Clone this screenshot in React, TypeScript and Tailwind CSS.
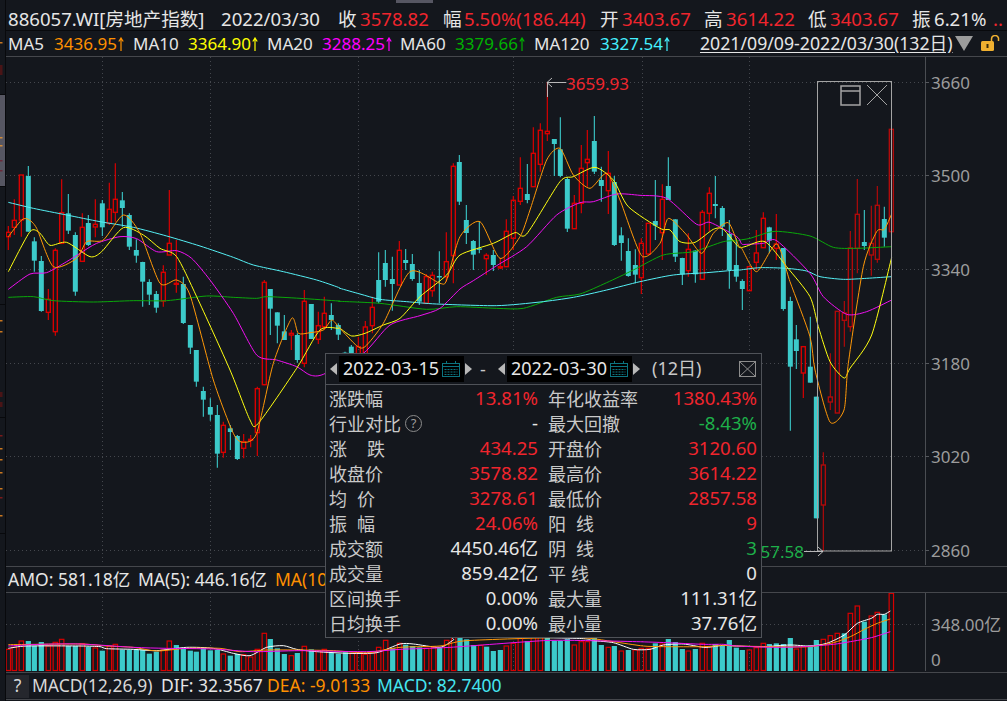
import React from "react"

const RED = "text-[#f0252d]"
const LABEL = "text-[#c9c9c9]"

type Pt = [number, number]
// x, high, body top, body bottom, low, 1 = up. Values read off crops, so each block has its own offset.
type C = [number, number, number, number, number, number]

const C_LEFT: C[] = [
  [25,258,277,290,330,1],[43,178,241,262,285,1],[64,105,105,240,290,1],[85,78,108,275,275,0],[103,292,304,362,395,0],
  [124,348,363,513,515,0],[145,447,478,517,540,1],[166,325,331,575,587,1],[185,118,218,310,310,1],[205,162,220,272,282,0],
  [226,277,285,455,467,0],[247,220,262,364,364,1],[265,225,249,315,318,0],[286,178,253,261,292,1],[307,180,190,262,288,0],
  [328,128,208,250,255,1],[346,70,178,217,245,1],[367,156,181,204,260,0],[388,220,225,320,330,0],[409,298,330,347,368,0],
  [428,365,366,425,500,0],[448,418,426,464,495,0],[469,453,462,503,518,0],[490,376,397,483,500,1],[508,150,310,345,345,1],
  [529,300,430,432,458,1],[550,410,432,549,552,0],[571,555,555,623,642,0],[589,630,630,725,740,0],[610,740,753,779,830,0],
  [631,775,801,824,842,0],[652,795,825,941,983,0],[670,845,856,937,953,1],[691,855,865,876,930,0],[712,885,888,957,960,0],
  [731,882,905,925,955,1],[752,885,898,901,922,1],[772,740,746,878,948,1],[793,420,427,734,736,1],[811,447,447,506,585,0],
  [832,517,517,557,610,0],[853,525,574,600,600,0],[874,570,580,585,630,1],[892,580,585,660,668,0],[913,450,484,670,682,1],
  [934,492,492,597,597,0],[955,515,557,598,612,1],[973,470,520,560,570,1],[994,490,525,540,570,0],[1015,550,555,584,600,0],
]
const C_MID: C[] = [
  [15,785,788,800,800,0],[34,765,770,800,800,0],[55,740,770,820,820,1],[76,693,711,800,800,1],[97,620,652,707,730,1],
  [116,487,570,635,640,0],[136,480,519,570,590,0],[157,500,567,582,662,0],[178,453,481,585,585,1],[197,477,510,519,540,0],
  [217,492,522,567,572,0],[238,540,579,635,645,0],[259,552,560,640,640,1],[277,545,556,602,620,1],[298,484,558,562,640,0],
  [319,427,515,560,575,1],[340,220,229,497,580,1],[358,195,216,335,345,0],[379,345,390,429,462,0],[400,450,453,494,540,0],
  [418,395,475,478,490,0],[439,490,496,506,555,1],[460,480,495,525,543,0],[481,505,530,534,537,1],[499,388,424,530,530,1],
  [520,318,331,445,480,1],[541,202,295,334,345,1],[562,222,312,330,340,0],[580,112,190,290,290,1],[601,100,121,223,245,1],
  [622,-24,124,131,153,1],[643,150,147,162,258,0],[661,82,178,258,262,0],[682,262,267,416,426,0],[703,315,340,416,416,1],
  [724,165,235,340,370,1],[742,120,208,218,290,1],[763,78,153,245,252,0],[784,230,270,288,335,0],[805,183,250,302,372,1],
  [823,258,276,465,468,0],[844,412,436,459,512,0],[865,445,483,558,560,0],[886,478,525,554,580,0],[904,445,460,563,612,1],
  [925,400,400,492,495,1],[946,270,393,407,450,0],[967,283,328,428,510,1],[985,202,288,330,330,0],[1006,388,388,500,516,0],
  [1027,503,504,553,585,0],[1045,430,478,542,560,1],[1066,480,482,553,578,0],[1087,360,367,568,568,1],[1108,292,310,370,425,1],
  [1126,258,342,348,385,0],[1147,348,354,410,438,0],[1168,390,432,540,596,0],[1189,445,525,560,575,0],
]
const C_RIGHT: C[] = [
  [127,628,633,657,720,0],[148,590,590,662,662,1],[169,480,549,577,600,1],[190,427,445,533,533,1],[208,470,472,512,550,0],
  [229,432,522,535,570,1],[250,534,534,717,722,0],[271,680,693,890,1082,0],[289,765,808,843,897,0],[310,828,830,909,984,1],
  [331,740,890,938,938,0],[349,980,980,1345,1345,0],[370,1147,1185,1305,1443,1],[391,850,981,996,1020,1],[412,724,724,1029,1029,1],
  [433,693,729,751,830,1],[451,483,534,770,785,1],[472,327,433,535,610,1],[493,420,516,528,540,0],[514,407,520,555,617,1],
  [532,348,406,568,578,1],[553,410,447,503,530,0],[574,178,178,485,485,1],
]

const shift = (list: C[], ox: number, oy: number): C[] =>
  list.map(([x, h, t, b, l, up]) => [ox + x / 3, oy + h / 3, oy + t / 3, oy + b / 3, oy + l / 3, up])

const CANDLES = [...shift(C_LEFT, 0, 140), ...shift(C_MID, 340, 90), ...shift(C_RIGHT, 700, 70)]

// stitch the three crops of one MA line back together
const joinLine = (a: Pt[], b: Pt[], c: Pt[]): Pt[] => [
  ...a.map(([x, y]): Pt => [x / 3, 140 + y / 3]),
  ...b.map(([x, y]): Pt => [340 + x / 3, 90 + y / 3]).filter(([x]) => x < 740),
  ...c.map(([x, y]): Pt => [700 + x / 3, 70 + y / 3]).filter(([x]) => x >= 740),
]

const MA120 = joinLine(
  [[25,187],[100,205],[200,225],[300,245],[400,262],[500,288],[600,318],[700,352],[760,375],[850,395],[950,420],[1015,442]],
  [[0,595],[60,612],[120,628],[200,635],[290,642],[470,647],[600,636],[700,622],[800,600],[900,575],[1000,555],[1100,548],[1190,540]],
  [[120,600],[180,593],[260,595],[320,603],[360,620],[430,628],[500,625],[575,620]],
)
const MA60 = joinLine(
  [[25,472],[100,470],[160,482],[280,486],[400,482],[500,482],[620,468],[700,472],[770,475],[800,470],[900,475],[1015,483]],
  [[0,634],[120,640],[260,658],[350,650],[470,655],[550,655],[650,622],[720,612],[800,578],[880,540],[970,495],[1060,485],[1150,455],[1195,452]],
  [[120,510],[150,505],[225,484],[330,498],[400,532],[470,535],[575,530]],
)
const MA20 = joinLine(
  [[25,448],[90,402],[140,398],[200,365],[240,340],[290,310],[360,290],[410,296],[470,335],[530,332],[575,355],[630,420],[700,520],[770,645],[830,660],[890,680],[930,705],[970,703]],
  [[70,790],[150,705],[240,677],[300,655],[360,597],[400,572],[470,527],[560,470],[650,375],[720,338],[760,335],[830,312],[900,316],[980,325],[1070,403],[1110,397],[1190,440]],
  [[125,522],[140,523],[190,520],[230,512],[330,610],[370,680],[440,733],[500,725],[575,690]],
)
const MA10 = joinLine(
  [[25,395],[90,275],[120,280],[150,316],[200,307],[270,350],[305,335],[370,263],[430,285],[480,325],[530,350],[590,470],[690,690],[750,840],[775,850],[890,685],[960,570],[1015,565]],
  [[0,715],[35,738],[75,730],[130,705],[180,685],[240,620],[320,555],[360,495],[460,460],[525,428],[560,432],[660,275],[700,260],[765,232],[820,270],[865,350],[960,415],[990,420],[1020,455],[1065,457],[1120,418],[1150,418],[1195,470]],
  [[135,530],[195,515],[260,590],[330,680],[355,770],[390,875],[432,924],[450,895],[515,795],[575,562]],
)
const MA5 = joinLine(
  [[25,290],[65,240],[85,238],[110,265],[160,380],[230,355],[260,305],[310,300],[370,225],[420,280],[480,430],[530,420],[570,465],[640,720],[700,880],[730,907],[770,880],[820,670],[875,535],[895,580],[930,578],[970,570],[995,540],[1015,560]],
  [[0,715],[50,767],[75,770],[130,700],[210,545],[300,580],[320,570],[360,440],[420,395],[480,505],[540,440],[570,360],[620,210],[660,175],[700,255],[750,295],[800,250],[840,330],[905,497],[960,460],[985,385],[1040,435],[1085,490],[1120,430],[1165,398],[1195,465]],
  [[125,535],[170,605],[230,522],[270,635],[330,800],[345,900],[390,1056],[432,1020],[445,880],[490,590],[530,485],[553,478],[575,432]],
)

// volume bars: x, top, 1 = hollow red
const V_LEFT: Pt[] = [[25,268],[43,262],[64,243],[85,243],[103,258],[124,246],[145,258],[166,247],[185,238],[205,258],[226,258],[247,251],[265,260],[286,264],[307,272],[328,258],[346,253],[367,269],[388,269],[409,268],[428,269],[448,281],[469,275],[490,270],[508,243],[529,255],[550,265],[571,272],[589,275],[610,262],[631,271],[652,270],[670,282],[691,287],[712,282],[731,284],[752,291],[772,268],[793,220],[811,237],[832,265],[853,282],[874,287],[892,279],[913,259],[934,268],[955,272],[973,268],[994,278],[1015,281],[1036,277],[1057,280],[1078,278],[1096,283],[1117,278],[1136,262],[1157,241],[1178,265],[1199,250],[1217,254],[1238,258],[1259,262],[1280,265],[1301,262],[1319,262],[1340,241],[1361,232],[1380,230],[1400,238],[1421,255],[1442,256],[1460,260]]
const V_LEFT_UP = [1,1,1,0,0,0,1,1,1,0,0,1,0,1,0,1,1,0,0,0,0,0,0,1,1,0,0,0,0,0,0,0,1,0,0,1,1,1,1,0,0,0,1,0,1,0,1,1,0,0,0,1,1,1,1,1,1,0,1,0,0,0,1,1,0,1,1,0,0,0,1,0]
const V_MID: [number, number, number][] = [[10,93,0],[31,90,0],[49,78,1],[70,70,1],[91,50,1],[112,63,0],[130,40,1],[151,40,1],[172,50,0],[193,62,0],[211,62,0],[232,57,0],[253,75,1],[274,65,1],[292,65,1],[313,52,0],[334,75,0],[355,82,1],[373,78,0],[394,93,1],[415,90,0],[436,90,1],[454,85,1],[475,85,1],[496,70,0],[517,72,1],[535,57,0],[556,66,0],[577,87,0],[595,93,1],[616,87,0],[637,70,1],[658,80,1],[676,72,0],[697,78,0],[718,60,0]]
const V_RIGHT: [number, number, number][] = [[109,833,0],[127,840,0],[148,840,1],[169,833,1],[190,820,1],[208,822,0],[229,820,0],[250,822,0],[271,804,0],[289,837,1],[310,830,1],[331,826,0],[349,810,0],[370,808,1],[391,797,1],[412,790,1],[433,790,0],[451,730,1],[472,708,1],[493,755,0],[514,738,1],[532,727,1],[553,733,0],[574,670,1]]

const BARS: [number, number, number][] = [
  ...V_LEFT.map(([x, y], i): [number, number, number] => [x / 3, 560 + y / 3, V_LEFT_UP[i]]),
  ...V_MID.map(([x, y, u]): [number, number, number] => [490 + x / 3, 620 + y / 3, u]),
  ...V_RIGHT.map(([x, y, u]): [number, number, number] => [700 + x / 3, 370 + y / 3, u]),
]

const volLine = (a: Pt[], b: Pt[], c: Pt[]): Pt[] => [
  ...a.map(([x, y]): Pt => [x / 3, 560 + y / 3]),
  ...b.map(([x, y]): Pt => [490 + x / 3, 620 + y / 3]),
  ...c.map(([x, y]): Pt => [700 + x / 3, 370 + y / 3]),
]
const VOL_WHITE = volLine(
  [[25,265],[80,258],[240,258],[300,260],[320,266],[400,268],[470,272],[560,262],[640,265],[700,280],[750,287],[800,262],[850,257],[890,268],[950,275],[1050,280],[1130,278],[1200,252],[1240,252],[1320,262],[1360,240],[1380,230]],
  [[260,55],[310,62],[370,68],[430,88],[480,88],[520,75],[580,72],[640,82],[670,80],[700,76]],
  [[109,828],[190,830],[270,825],[330,828],[380,820],[433,795],[472,760],[514,745],[532,733],[553,733],[571,723]],
)
const VOL_ORANGE = volLine(
  [[25,254],[240,252],[320,258],[400,262],[470,273],[560,265],[660,265],[720,275],[800,270],[900,270],[1000,272],[1100,278],[1200,262],[1320,258],[1400,242]],
  [[220,52],[300,55],[370,65],[460,78],[520,80],[640,80],[700,76]],
  [[109,828],[220,830],[330,830],[400,818],[451,800],[493,778],[532,760],[571,747]],
)
const VOL_PINK = volLine(
  [[25,258],[120,253],[240,252],[400,262],[500,265],[640,267],[760,275],[900,272],[1100,275],[1200,268],[1350,262]],
  [[160,62],[300,62],[440,65],[530,68],[640,73],[700,73]],
  [[109,828],[220,832],[310,830],[400,823],[451,815],[514,803],[571,785]],
)

const toPath = (pts: Pt[]) => {
  // catmull-rom so the MA lines don't look like straight segments
  let d = `M${pts[0][0]} ${pts[0][1]}`
  for (let i = 0; i < pts.length - 1; i++) {
    const p0 = pts[Math.max(i - 1, 0)]
    const p1 = pts[i]
    const p2 = pts[i + 1]
    const p3 = pts[Math.min(i + 2, pts.length - 1)]
    const k = 0.12
    d += `C${p1[0] + (p2[0] - p0[0]) * k} ${p1[1] + (p2[1] - p0[1]) * k} ${p2[0] - (p3[0] - p1[0]) * k} ${p2[1] - (p3[1] - p1[1]) * k} ${p2[0]} ${p2[1]}`
  }
  return d
}

const GRID_X = [102, 210, 358, 513, 642, 749]
const AXIS = [
  { y: 82, label: "3660" },
  { y: 175, label: "3500" },
  { y: 269, label: "3340" },
  { y: 363, label: "3180" },
  { y: 456, label: "3020" },
  { y: 550, label: "2860" },
]

function MainChart() {
  return (
    <svg viewBox="6 57 1001 509" className="block w-[1001px] h-[509px]">
      {AXIS.map((a) => (
        <line key={a.y} x1="6" x2="925" y1={a.y + 0.5} y2={a.y + 0.5} stroke="#44474d" strokeDasharray="1 3" />
      ))}
      {GRID_X.map((x) => (
        <line key={x} x1={x + 0.5} x2={x + 0.5} y1="57" y2="565" stroke="#44474d" strokeDasharray="1 3" />
      ))}
      <line x1="925.5" x2="925.5" y1="57" y2="565" stroke="#4a4d52" />

      {CANDLES.map(([x, h, t, b, l, up]) =>
        up ? (
          <g key={x} stroke={x > 815 ? "#b00a0a" : "#d80000"}>
            <line x1={x} x2={x} y1={h} y2={t} strokeWidth="1.2" />
            <line x1={x} x2={x} y1={b} y2={l} strokeWidth="1.2" />
            <rect x={x - 2} y={t} width="4" height={Math.max(b - t, 1)} fill="none" strokeWidth="1.4" />
          </g>
        ) : (
          <g key={x}>
            <line x1={x} x2={x} y1={h} y2={l} stroke="#3ccaca" strokeWidth="1.1" />
            <rect x={x - 2.5} y={t} width="5" height={Math.max(b - t, 1.5)} fill="#3ccaca" />
          </g>
        ),
      )}

      <g fill="none" strokeWidth="1">
        <path d={toPath(MA60)} stroke="#0aa80a" />
        <path d={toPath(MA120)} stroke="#55f0f5" />
        <path d={toPath(MA20)} stroke="#f010f0" />
        <path d={toPath(MA10)} stroke="#ffff10" />
        <path d={toPath(MA5)} stroke="#ff9808" />
      </g>

      {/* selected range */}
      <rect x="817.5" y="81.5" width="74" height="469.5" fill="none" stroke="#a4a4a4" />
      <rect x="841" y="86" width="19" height="19" fill="none" stroke="#a4a4a4" strokeWidth="1.5" />
      <line x1="841" x2="860" y1="91" y2="91" stroke="#a4a4a4" strokeWidth="1.5" />
      <path d="M867 85 L887 105 M887 85 L867 105" stroke="#a4a4a4" fill="none" />

      {/* high / low markers */}
      <path d="M547.5 82 V97 M547 82.5 H566 M552 78 L547 82.5 L552 87" stroke="#c8c8c8" fill="none" strokeWidth="0.9" />
      <text x="566" y="83" dominantBaseline="central" fontSize="17" fill="#f0252d">3659.93</text>
      <path d="M804 551.5 H823 M818 547 L823 551.5 L818 556" stroke="#c8c8c8" fill="none" strokeWidth="0.9" />
      <text x="804" y="551" dominantBaseline="central" textAnchor="end" fontSize="17" fill="#1eb04a">57.58</text>

      {AXIS.map((a) => (
        <g key={a.label}>
          <line x1="925" x2="929" y1={a.y + 0.5} y2={a.y + 0.5} stroke="#55585d" />
          <text x="931" y={a.y} dominantBaseline="central" fontSize="17" fill="#9c9c9c">{a.label}</text>
        </g>
      ))}
    </svg>
  )
}

function VolumeChart() {
  return (
    <svg viewBox="6 593 1001 79" className="block w-[1001px] h-[79px]">
      <line x1="6" x2="925" y1="624.5" y2="624.5" stroke="#44474d" strokeDasharray="1 3" />
      {GRID_X.map((x) => (
        <line key={x} x1={x + 0.5} x2={x + 0.5} y1="593" y2="671" stroke="#44474d" strokeDasharray="1 3" />
      ))}
      <line x1="925.5" x2="925.5" y1="593" y2="671" stroke="#4a4d52" />
      {BARS.map(([x, y, up]) =>
        up ? (
          <rect key={x} x={x - 2.2} y={y} width="4.4" height={670.5 - y} fill="none" stroke="#d80000" strokeWidth="1.2" />
        ) : (
          <rect key={x} x={x - 2.6} y={y} width="5.2" height={671 - y} fill="#3ccaca" />
        ),
      )}
      <g fill="none" strokeWidth="1">
        <path d={toPath(VOL_WHITE)} stroke="#ffffff" />
        <path d={toPath(VOL_ORANGE)} stroke="#ff9808" />
        <path d={toPath(VOL_PINK)} stroke="#f010f0" />
      </g>
      <text x="931" y="624" dominantBaseline="central" fontSize="17" fill="#9c9c9c">348.00亿</text>
      <text x="931" y="659" dominantBaseline="central" fontSize="17" fill="#9c9c9c">0</text>
    </svg>
  )
}

function Up({ color }: { color: string }) {
  return (
    <svg width="6" height="14" viewBox="0 0 6 14" className="inline-block ml-[1px] align-[-1px]">
      <path d="M3 1 V14 M0.8 4.5 L3 1 L5.2 4.5" stroke={color} strokeWidth="1.2" fill="none" />
    </svg>
  )
}

function CalendarIcon() {
  return (
    <svg width="20" height="18" viewBox="0 0 20 18" className="shrink-0">
      <g stroke="#0c7480" fill="none">
        <rect x="1.5" y="3.5" width="17" height="13" />
        <path d="M1.5 6.5 H18.5 M5.5 1 V4 M14.5 1 V4" />
        <path d="M3.5 9.5 H16.5 M3.5 12 H16.5 M3.5 14.5 H16.5" strokeDasharray="2 1" />
      </g>
    </svg>
  )
}

function Tri({ dir }: { dir: "l" | "r" }) {
  return (
    <svg width="7" height="12" viewBox="0 0 7 12" className="shrink-0">
      <path d={dir === "l" ? "M7 0 V12 L0 6 Z" : "M0 0 V12 L7 6 Z"} fill="#b8b8b8" />
    </svg>
  )
}

function DateBox({ value }: { value: string }) {
  const [y, m, d] = value.split("-")
  return (
    <div className="w-[125px] h-[26px] bg-black flex items-center pl-[4px] gap-[2px] text-[#e6e6e6] text-[18px]">
      <span className="w-[96px] flex justify-between whitespace-nowrap pb-[2px]">
        <span>{y}</span><span>-</span><span>{m}</span><span>-</span><span>{d}</span>
      </span>
      <CalendarIcon />
    </div>
  )
}

const STATS: { l: React.ReactNode; v: string; cls: string; r: React.ReactNode; rv: string; rcls: string }[] = [
  { l: "涨跌幅", v: "13.81%", cls: RED, r: "年化收益率", rv: "1380.43%", rcls: RED },
  {
    l: (
      <span className="flex items-center gap-[4px]">
        行业对比
        <span className="w-[17px] h-[17px] rounded-full border border-[#8c8c8c] text-[#9c9c9c] text-[13px] flex items-center justify-center">?</span>
      </span>
    ),
    v: "-", cls: "text-[#e6e6e6]", r: "最大回撤", rv: "-8.43%", rcls: "text-[#1eb04a]",
  },
  { l: <Spread w="w-[56px]" a="涨" b="跌" />, v: "434.25", cls: RED, r: "开盘价", rv: "3120.60", rcls: RED },
  { l: "收盘价", v: "3578.82", cls: RED, r: "最高价", rv: "3614.22", rcls: RED },
  { l: <Spread w="w-[46px]" a="均" b="价" />, v: "3278.61", cls: RED, r: "最低价", rv: "2857.58", rcls: RED },
  { l: <Spread w="w-[46px]" a="振" b="幅" />, v: "24.06%", cls: RED, r: <Spread w="w-[46px]" a="阳" b="线" />, rv: "9", rcls: RED },
  { l: "成交额", v: "4450.46亿", cls: "text-[#e6e6e6]", r: <Spread w="w-[46px]" a="阴" b="线" />, rv: "3", rcls: "text-[#1eb04a]" },
  { l: "成交量", v: "859.42亿", cls: "text-[#e6e6e6]", r: <Spread w="w-[41px]" a="平" b="线" />, rv: "0", rcls: "text-[#e6e6e6]" },
  { l: "区间换手", v: "0.00%", cls: "text-[#e6e6e6]", r: "最大量", rv: "111.31亿", rcls: "text-[#e6e6e6]" },
  { l: "日均换手", v: "0.00%", cls: "text-[#e6e6e6]", r: "最小量", rv: "37.76亿", rcls: "text-[#e6e6e6]" },
]

function Spread({ a, b, w }: { a: string; b: string; w: string }) {
  return (
    <span className={`flex justify-between ${w}`}>
      <span>{a}</span>
      <span>{b}</span>
    </span>
  )
}

function RangePopup() {
  return (
    <div className="absolute left-[325px] top-[353px] w-[437px] h-[285px] bg-[#14171d] border border-[#4f5258] text-[18px] leading-none">
      <div className="h-[31px] border-b border-[#4f5258] flex items-center pl-[4px]">
        <Tri dir="l" />
        <span className="ml-[2px]"><DateBox value="2022-03-15" /></span>
        <span className="ml-[1px]"><Tri dir="r" /></span>
        <span className="ml-[8px] w-[18px] text-[#c9c9c9]">-</span>
        <Tri dir="l" />
        <span className="ml-[2px]"><DateBox value="2022-03-30" /></span>
        <span className="ml-[1px]"><Tri dir="r" /></span>
        <span className="ml-[12px] text-[#c9c9c9] w-[87px] pb-[2px]">(12日)</span>
        <svg width="17" height="16" viewBox="0 0 17 16">
          <rect x="0.5" y="0.5" width="16" height="15" fill="none" stroke="#8c8c8c" />
          <path d="M1 1 L16 15 M16 1 L1 15" stroke="#8c8c8c" />
        </svg>
      </div>
      <div className="pt-[1px] pl-[3px] grid grid-cols-[209px_209px] gap-x-[10px]">
        {STATS.map((s, i) => (
          <React.Fragment key={i}>
            <div className="h-[25px] flex items-center justify-between">
              <span className={LABEL}>{s.l}</span>
              <span className={`${s.cls} text-[18.6px]`}>{s.v}</span>
            </div>
            <div className="h-[25px] flex items-center justify-between">
              <span className={LABEL}>{s.r}</span>
              <span className={`${s.rcls} text-[18.6px]`}>{s.rv}</span>
            </div>
          </React.Fragment>
        ))}
      </div>
    </div>
  )
}

const STRIP_TICKS = [
  { y: 42, c: "#c9771f" }, { y: 65, c: "#4a1416" }, { y: 70, c: "#4a1416" }, { y: 137, c: "#d08a3a" }, { y: 145, c: "#d08a3a" },
  { y: 160, c: "#6a2a3a" }, { y: 170, c: "#6a2a3a" }, { y: 320, c: "#c9771f" }, { y: 331, c: "#c9771f" }, { y: 392, c: "#4a1416" },
  { y: 402, c: "#4a1416" }, { y: 435, c: "#7a1a1a" }, { y: 448, c: "#c9771f" }, { y: 459, c: "#c9771f" }, { y: 472, c: "#c9771f" },
  { y: 488, c: "#c9771f" }, { y: 497, c: "#7a1a1a" }, { y: 515, c: "#c9771f" },
]

function LeftStrip() {
  return (
    <div className="relative w-[6px] h-full shrink-0 border-r border-[#08090c] bg-[#14171d] flex flex-col">
      <div className="h-[95px] border-b border-[#08090c]" />
      <div className="h-[91px] bg-[#565662]" />
      <div className="h-[119px] border-y border-[#08090c]" />
      <div className="h-[113px] border-b border-[#08090c]" />
      <div className="h-[116px] border-b border-[#08090c]" />
      <div className="flex-1" />
      <svg width="5" height="701" viewBox="0 0 5 701" className="absolute left-0 top-0">
        {STRIP_TICKS.map((t) => (
          <rect key={t.y} x="0" y={t.y} width="2.5" height={t.c === "#4a1416" ? 5 : 1.5} fill={t.c} />
        ))}
      </svg>
    </div>
  )
}

function Cell({ w, cls, children }: { w: string; cls: string; children: React.ReactNode }) {
  return <span className={`${w} ${cls} shrink-0 whitespace-nowrap`}>{children}</span>
}

export default function App() {
  const plain = "text-[#e6e6e6]"
  return (
    <div className="relative w-[1007px] h-[701px] overflow-hidden bg-[#14171d] flex font-['Noto_Sans','Noto_Sans_CJK_SC',sans-serif] leading-none">
      <LeftStrip />
      <div className="flex-1 min-w-0 flex flex-col">
        <div className="h-[8px] pl-[390px]">
          <div className="w-[37px] h-[3px] bg-[#565662]" />
        </div>

        <div className="h-[23px] pl-[2px] flex items-center text-[18.6px] border-b border-[#08090c]">
          <Cell w="w-[213px]" cls={plain}>886057.WI[房地产指数]</Cell>
          <Cell w="w-[117px]" cls={plain}>2022/03/30</Cell>
          <Cell w="w-[22px]" cls={plain}>收</Cell>
          <Cell w="w-[83px]" cls={RED}>3578.82</Cell>
          <Cell w="w-[21px]" cls={plain}>幅</Cell>
          <Cell w="w-[136px]" cls={RED}>5.50%(186.44)</Cell>
          <Cell w="w-[22px]" cls={plain}>开</Cell>
          <Cell w="w-[82px]" cls={RED}>3403.67</Cell>
          <Cell w="w-[22px]" cls={plain}>高</Cell>
          <Cell w="w-[82px]" cls={RED}>3614.22</Cell>
          <Cell w="w-[22px]" cls={plain}>低</Cell>
          <Cell w="w-[82px]" cls={RED}>3403.67</Cell>
          <Cell w="w-[22px]" cls={plain}>振</Cell>
          <Cell w="w-[59px]" cls={plain}>6.21%</Cell>
          <Cell w="w-[12px]" cls={RED}>..</Cell>
        </div>

        <div className="h-[26px] pl-[2px] flex items-center text-[17px] border-b border-[#45474c]">
          <Cell w="w-[46px]" cls={plain}>MA5</Cell>
          <Cell w="w-[79px]" cls="text-[#ff9000]">3436.95<Up color="#ff9000" /></Cell>
          <Cell w="w-[55px]" cls={plain}>MA10</Cell>
          <Cell w="w-[79px]" cls="text-[#ffff00]">3364.90<Up color="#ffff00" /></Cell>
          <Cell w="w-[55px]" cls={plain}>MA20</Cell>
          <Cell w="w-[78px]" cls="text-[#ff00ff]">3288.25<Up color="#ff00ff" /></Cell>
          <Cell w="w-[55px]" cls={plain}>MA60</Cell>
          <Cell w="w-[79px]" cls="text-[#00b000]">3379.66<Up color="#00b000" /></Cell>
          <Cell w="w-[66px]" cls={plain}>MA120</Cell>
          <Cell w="w-[100px]" cls="text-[#45f0ff]">3327.54<Up color="#45f0ff" /></Cell>
          <Cell w="w-[255px]" cls={`${plain} text-[17.7px] underline underline-offset-2`}>2021/09/09-2022/03/30(132日)</Cell>
          <svg width="18" height="15" viewBox="0 0 18 15" className="shrink-0">
            <path d="M0 0 H18 L9 15 Z" fill="#9c9c9c" />
          </svg>
          <svg width="21" height="17" viewBox="0 0 21 17" className="shrink-0 ml-[7px]">
            <rect x="1" y="6" width="13" height="10" rx="1.5" fill="#f0b030" />
            <rect x="6.5" y="9" width="2" height="4" fill="#3a2a08" />
            <path d="M11.5 6 V4 A3.6 3.6 0 0 1 18.5 3 V6" fill="none" stroke="#f0b030" strokeWidth="1.5" />
          </svg>
        </div>

        <MainChart />

        <div className="h-[27px] pl-[2px] flex items-center text-[17.5px] border-y border-[#45474c]">
          <Cell w="w-[130px]" cls={plain}>AMO: 581.18亿</Cell>
          <Cell w="w-[137px]" cls={plain}>MA(5): 446.16亿</Cell>
          <Cell w="w-[50px]" cls="text-[#ff9000]">MA(10</Cell>
        </div>

        <VolumeChart />

        <div className="h-[28px] flex items-center text-[17.5px] border-y border-[#45474c]">
          <span className="w-[23px] h-[23px] bg-[#25272d] text-[#d8d8d8] flex items-center justify-center shrink-0">?</span>
          <Cell w="w-[129px]" cls="text-[#d8d8d8] ml-[3px]">MACD(12,26,9)</Cell>
          <Cell w="w-[106px]" cls={plain}>DIF: 32.3567</Cell>
          <Cell w="w-[110px]" cls="text-[#ff9000]">DEA: -9.0133</Cell>
          <Cell w="w-[130px]" cls="text-[#45e6f0]">MACD: 82.7400</Cell>
        </div>
      </div>
      <RangePopup />
    </div>
  )
}
